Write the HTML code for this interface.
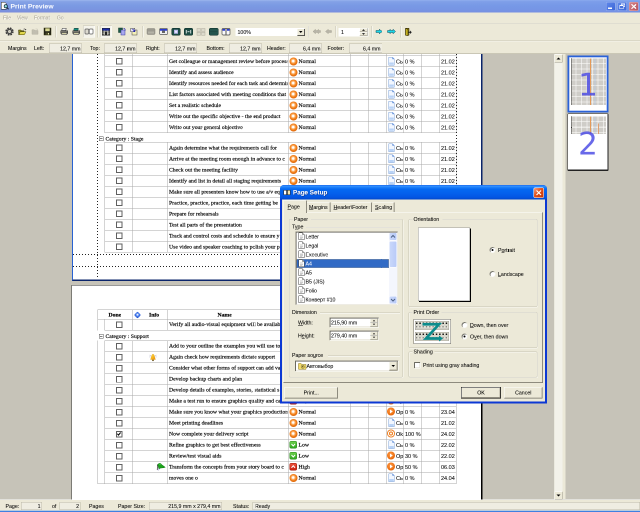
<!DOCTYPE html><html><head><meta charset="utf-8"><title>Print Preview</title><style>
html,body{margin:0;padding:0;background:#c6c3b8;}
body{width:640px;height:512px;overflow:hidden;position:relative;}
#r{position:absolute;left:0;top:0;width:1280px;height:1024px;transform:scale(.5);transform-origin:0 0;overflow:hidden;
 font-family:"Liberation Sans","DejaVu Sans",sans-serif;font-size:10.5px;color:#000;will-change:transform;}
#r div,#r span,#r svg{position:absolute;box-sizing:border-box;}
.t{white-space:nowrap;line-height:14px;height:14px;-webkit-text-stroke:.1px currentColor;}
.ser{font-family:"Liberation Serif","DejaVu Serif",serif;font-size:11.4px;-webkit-text-stroke:.3px #000;white-space:nowrap;line-height:14px;height:14px;overflow:hidden}
.fld{border:1px solid #bdbaa8;background:#efede2;height:20px;}
.fld .t{right:2px;top:2px;}
.etch{border:1px solid #d0cebf;border-radius:4px;}
.btn{border:1px solid #003c74;border-radius:3px;background:linear-gradient(#fff,#f3f2ea 60%,#d9d6c8);text-align:center;line-height:19px;}
.wb{border:1px solid rgba(255,255,255,.45);border-radius:3px;width:19px;height:18px;top:4px;}
</style></head><body><div id="r">
<div style="left:0;top:108px;width:1280px;height:890px;background:#c6c3b8"></div>
<div style="left:144px;top:60px;width:821px;height:502px;background:#fff;border:2px solid #2862d2;border-right:3px solid #0a246a;border-bottom:3px solid #0a246a"></div>
<div style="left:209px;top:111px;width:703px;height:23px;border-top:1px solid #a9a9a9;border-bottom:1px solid #a9a9a9;"></div><div style="left:232px;top:116px;width:13px;height:13px;background:#606060"></div><div style="left:234px;top:118px;width:9px;height:9px;background:#fff"></div><div class="ser" style="left:338px;top:115px;width:237px">Get colleague or management review before processing</div><div style="left:579px;top:115px;width:16px;height:16px;border-radius:50%;background:radial-gradient(circle at 46% 44%,#fff 0 14%,#ffc080 26%,#f48420 46%,#e06808 68%,#b84c00 100%);"></div><div class="ser" style="left:597px;top:115px;">Normal</div><svg style="left:776px;top:114px" width="14" height="17" viewBox="0 0 14 17"><path d="M1.5 .5 H9 L12.5 4 V16.5 H1.5 Z" fill="#f2f7ff" stroke="#7fa3d8"/><path d="M9 .5 V4 H12.5Z" fill="#5f8fe0" stroke="#6f98dc"/><path d="M2.500 11 H11.500 V15.500 H2.500Z" fill="#b8d2f6"/></svg><div class="t" style="left:792px;top:116px;width:15px;overflow:hidden;font-size:11px">Сь</div><div class="t" style="left:810px;top:116px;font-size:11px">0 %</div><div class="t" style="left:882px;top:116px;font-size:11px;width:28px;overflow:hidden">21.02.</div>
<div style="left:209px;top:133px;width:703px;height:23px;border-top:1px solid #a9a9a9;border-bottom:1px solid #a9a9a9;"></div><div style="left:232px;top:138px;width:13px;height:13px;background:#606060"></div><div style="left:234px;top:140px;width:9px;height:9px;background:#fff"></div><div class="ser" style="left:338px;top:137px;width:237px">Identify and assess audience</div><div style="left:579px;top:137px;width:16px;height:16px;border-radius:50%;background:radial-gradient(circle at 46% 44%,#fff 0 14%,#ffc080 26%,#f48420 46%,#e06808 68%,#b84c00 100%);"></div><div class="ser" style="left:597px;top:137px;">Normal</div><svg style="left:776px;top:136px" width="14" height="17" viewBox="0 0 14 17"><path d="M1.5 .5 H9 L12.5 4 V16.5 H1.5 Z" fill="#f2f7ff" stroke="#7fa3d8"/><path d="M9 .5 V4 H12.5Z" fill="#5f8fe0" stroke="#6f98dc"/><path d="M2.500 11 H11.500 V15.500 H2.500Z" fill="#b8d2f6"/></svg><div class="t" style="left:792px;top:138px;width:15px;overflow:hidden;font-size:11px">Сь</div><div class="t" style="left:810px;top:138px;font-size:11px">0 %</div><div class="t" style="left:882px;top:138px;font-size:11px;width:28px;overflow:hidden">21.02.</div>
<div style="left:209px;top:155px;width:703px;height:23px;border-top:1px solid #a9a9a9;border-bottom:1px solid #a9a9a9;"></div><div style="left:232px;top:160px;width:13px;height:13px;background:#606060"></div><div style="left:234px;top:162px;width:9px;height:9px;background:#fff"></div><div class="ser" style="left:338px;top:159px;width:237px">Identify resources needed for each task and determine</div><div style="left:579px;top:159px;width:16px;height:16px;border-radius:50%;background:radial-gradient(circle at 46% 44%,#fff 0 14%,#ffc080 26%,#f48420 46%,#e06808 68%,#b84c00 100%);"></div><div class="ser" style="left:597px;top:159px;">Normal</div><svg style="left:776px;top:158px" width="14" height="17" viewBox="0 0 14 17"><path d="M1.5 .5 H9 L12.5 4 V16.5 H1.5 Z" fill="#f2f7ff" stroke="#7fa3d8"/><path d="M9 .5 V4 H12.5Z" fill="#5f8fe0" stroke="#6f98dc"/><path d="M2.500 11 H11.500 V15.500 H2.500Z" fill="#b8d2f6"/></svg><div class="t" style="left:792px;top:160px;width:15px;overflow:hidden;font-size:11px">Сь</div><div class="t" style="left:810px;top:160px;font-size:11px">0 %</div><div class="t" style="left:882px;top:160px;font-size:11px;width:28px;overflow:hidden">21.02.</div>
<div style="left:209px;top:177px;width:703px;height:23px;border-top:1px solid #a9a9a9;border-bottom:1px solid #a9a9a9;"></div><div style="left:232px;top:182px;width:13px;height:13px;background:#606060"></div><div style="left:234px;top:184px;width:9px;height:9px;background:#fff"></div><div class="ser" style="left:338px;top:181px;width:237px">List factors associated with meeting conditions that</div><div style="left:579px;top:181px;width:16px;height:16px;border-radius:50%;background:radial-gradient(circle at 46% 44%,#fff 0 14%,#ffc080 26%,#f48420 46%,#e06808 68%,#b84c00 100%);"></div><div class="ser" style="left:597px;top:181px;">Normal</div><svg style="left:776px;top:180px" width="14" height="17" viewBox="0 0 14 17"><path d="M1.5 .5 H9 L12.5 4 V16.5 H1.5 Z" fill="#f2f7ff" stroke="#7fa3d8"/><path d="M9 .5 V4 H12.5Z" fill="#5f8fe0" stroke="#6f98dc"/><path d="M2.500 11 H11.500 V15.500 H2.500Z" fill="#b8d2f6"/></svg><div class="t" style="left:792px;top:182px;width:15px;overflow:hidden;font-size:11px">Сь</div><div class="t" style="left:810px;top:182px;font-size:11px">0 %</div><div class="t" style="left:882px;top:182px;font-size:11px;width:28px;overflow:hidden">21.02.</div>
<div style="left:209px;top:199px;width:703px;height:23px;border-top:1px solid #a9a9a9;border-bottom:1px solid #a9a9a9;"></div><div style="left:232px;top:204px;width:13px;height:13px;background:#606060"></div><div style="left:234px;top:206px;width:9px;height:9px;background:#fff"></div><div class="ser" style="left:338px;top:203px;width:237px">Set a realistic schedule</div><div style="left:579px;top:203px;width:16px;height:16px;border-radius:50%;background:radial-gradient(circle at 46% 44%,#fff 0 14%,#ffc080 26%,#f48420 46%,#e06808 68%,#b84c00 100%);"></div><div class="ser" style="left:597px;top:203px;">Normal</div><svg style="left:776px;top:202px" width="14" height="17" viewBox="0 0 14 17"><path d="M1.5 .5 H9 L12.5 4 V16.5 H1.5 Z" fill="#f2f7ff" stroke="#7fa3d8"/><path d="M9 .5 V4 H12.5Z" fill="#5f8fe0" stroke="#6f98dc"/><path d="M2.500 11 H11.500 V15.500 H2.500Z" fill="#b8d2f6"/></svg><div class="t" style="left:792px;top:204px;width:15px;overflow:hidden;font-size:11px">Сь</div><div class="t" style="left:810px;top:204px;font-size:11px">0 %</div><div class="t" style="left:882px;top:204px;font-size:11px;width:28px;overflow:hidden">21.02.</div>
<div style="left:209px;top:221px;width:703px;height:23px;border-top:1px solid #a9a9a9;border-bottom:1px solid #a9a9a9;"></div><div style="left:232px;top:226px;width:13px;height:13px;background:#606060"></div><div style="left:234px;top:228px;width:9px;height:9px;background:#fff"></div><div class="ser" style="left:338px;top:225px;width:237px">Write out the specific objective - the end product</div><div style="left:579px;top:225px;width:16px;height:16px;border-radius:50%;background:radial-gradient(circle at 46% 44%,#fff 0 14%,#ffc080 26%,#f48420 46%,#e06808 68%,#b84c00 100%);"></div><div class="ser" style="left:597px;top:225px;">Normal</div><svg style="left:776px;top:224px" width="14" height="17" viewBox="0 0 14 17"><path d="M1.5 .5 H9 L12.5 4 V16.5 H1.5 Z" fill="#f2f7ff" stroke="#7fa3d8"/><path d="M9 .5 V4 H12.5Z" fill="#5f8fe0" stroke="#6f98dc"/><path d="M2.500 11 H11.500 V15.500 H2.500Z" fill="#b8d2f6"/></svg><div class="t" style="left:792px;top:226px;width:15px;overflow:hidden;font-size:11px">Сь</div><div class="t" style="left:810px;top:226px;font-size:11px">0 %</div><div class="t" style="left:882px;top:226px;font-size:11px;width:28px;overflow:hidden">21.02.</div>
<div style="left:209px;top:243px;width:703px;height:23px;border-top:1px solid #a9a9a9;border-bottom:1px solid #a9a9a9;"></div><div style="left:232px;top:248px;width:13px;height:13px;background:#606060"></div><div style="left:234px;top:250px;width:9px;height:9px;background:#fff"></div><div class="ser" style="left:338px;top:247px;width:237px">Write out your general objective</div><div style="left:579px;top:247px;width:16px;height:16px;border-radius:50%;background:radial-gradient(circle at 46% 44%,#fff 0 14%,#ffc080 26%,#f48420 46%,#e06808 68%,#b84c00 100%);"></div><div class="ser" style="left:597px;top:247px;">Normal</div><svg style="left:776px;top:246px" width="14" height="17" viewBox="0 0 14 17"><path d="M1.5 .5 H9 L12.5 4 V16.5 H1.5 Z" fill="#f2f7ff" stroke="#7fa3d8"/><path d="M9 .5 V4 H12.5Z" fill="#5f8fe0" stroke="#6f98dc"/><path d="M2.500 11 H11.500 V15.500 H2.500Z" fill="#b8d2f6"/></svg><div class="t" style="left:792px;top:248px;width:15px;overflow:hidden;font-size:11px">Сь</div><div class="t" style="left:810px;top:248px;font-size:11px">0 %</div><div class="t" style="left:882px;top:248px;font-size:11px;width:28px;overflow:hidden">21.02.</div>
<div style="left:209px;top:108px;width:1px;height:157px;background:#a9a9a9"></div><div style="left:265px;top:108px;width:1px;height:157px;background:#a9a9a9"></div><div style="left:335px;top:108px;width:1px;height:157px;background:#a9a9a9"></div><div style="left:576px;top:108px;width:1px;height:157px;background:#a9a9a9"></div><div style="left:701px;top:108px;width:1px;height:157px;background:#a9a9a9"></div><div style="left:737px;top:108px;width:1px;height:157px;background:#a9a9a9"></div><div style="left:773px;top:108px;width:1px;height:157px;background:#a9a9a9"></div><div style="left:807px;top:108px;width:1px;height:157px;background:#a9a9a9"></div><div style="left:842px;top:108px;width:1px;height:157px;background:#a9a9a9"></div><div style="left:879px;top:108px;width:1px;height:157px;background:#a9a9a9"></div><div style="left:912px;top:108px;width:1px;height:157px;background:#a9a9a9"></div>
<div style="left:198px;top:273px;width:9px;height:9px;border:1px solid #555;background:#fff"></div><div style="left:200px;top:277px;width:5px;height:1px;background:#000"></div><div class="ser" style="left:211px;top:270px">Category : Stage</div>
<div style="left:209px;top:284px;width:703px;height:23px;border-top:1px solid #a9a9a9;border-bottom:1px solid #a9a9a9;"></div><div style="left:232px;top:289px;width:13px;height:13px;background:#606060"></div><div style="left:234px;top:291px;width:9px;height:9px;background:#fff"></div><div class="ser" style="left:338px;top:288px;width:237px">Again determine what the requirements call for</div><div style="left:579px;top:288px;width:16px;height:16px;border-radius:50%;background:radial-gradient(circle at 46% 44%,#fff 0 14%,#ffc080 26%,#f48420 46%,#e06808 68%,#b84c00 100%);"></div><div class="ser" style="left:597px;top:288px;">Normal</div><svg style="left:776px;top:287px" width="14" height="17" viewBox="0 0 14 17"><path d="M1.5 .5 H9 L12.5 4 V16.5 H1.5 Z" fill="#f2f7ff" stroke="#7fa3d8"/><path d="M9 .5 V4 H12.5Z" fill="#5f8fe0" stroke="#6f98dc"/><path d="M2.500 11 H11.500 V15.500 H2.500Z" fill="#b8d2f6"/></svg><div class="t" style="left:792px;top:289px;width:15px;overflow:hidden;font-size:11px">Сь</div><div class="t" style="left:810px;top:289px;font-size:11px">0 %</div><div class="t" style="left:882px;top:289px;font-size:11px;width:28px;overflow:hidden">21.02.</div>
<div style="left:209px;top:306px;width:703px;height:23px;border-top:1px solid #a9a9a9;border-bottom:1px solid #a9a9a9;"></div><div style="left:232px;top:311px;width:13px;height:13px;background:#606060"></div><div style="left:234px;top:313px;width:9px;height:9px;background:#fff"></div><div class="ser" style="left:338px;top:310px;width:237px">Arrive at the meeting room enough in advance to c</div><div style="left:579px;top:310px;width:16px;height:16px;border-radius:50%;background:radial-gradient(circle at 46% 44%,#fff 0 14%,#ffc080 26%,#f48420 46%,#e06808 68%,#b84c00 100%);"></div><div class="ser" style="left:597px;top:310px;">Normal</div><svg style="left:776px;top:309px" width="14" height="17" viewBox="0 0 14 17"><path d="M1.5 .5 H9 L12.5 4 V16.5 H1.5 Z" fill="#f2f7ff" stroke="#7fa3d8"/><path d="M9 .5 V4 H12.5Z" fill="#5f8fe0" stroke="#6f98dc"/><path d="M2.500 11 H11.500 V15.500 H2.500Z" fill="#b8d2f6"/></svg><div class="t" style="left:792px;top:311px;width:15px;overflow:hidden;font-size:11px">Сь</div><div class="t" style="left:810px;top:311px;font-size:11px">0 %</div><div class="t" style="left:882px;top:311px;font-size:11px;width:28px;overflow:hidden">21.02.</div>
<div style="left:209px;top:328px;width:703px;height:23px;border-top:1px solid #a9a9a9;border-bottom:1px solid #a9a9a9;"></div><div style="left:232px;top:333px;width:13px;height:13px;background:#606060"></div><div style="left:234px;top:335px;width:9px;height:9px;background:#fff"></div><div class="ser" style="left:338px;top:332px;width:237px">Check out the meeting facility</div><div style="left:579px;top:332px;width:16px;height:16px;border-radius:50%;background:radial-gradient(circle at 46% 44%,#fff 0 14%,#ffc080 26%,#f48420 46%,#e06808 68%,#b84c00 100%);"></div><div class="ser" style="left:597px;top:332px;">Normal</div><svg style="left:776px;top:331px" width="14" height="17" viewBox="0 0 14 17"><path d="M1.5 .5 H9 L12.5 4 V16.5 H1.5 Z" fill="#f2f7ff" stroke="#7fa3d8"/><path d="M9 .5 V4 H12.5Z" fill="#5f8fe0" stroke="#6f98dc"/><path d="M2.500 11 H11.500 V15.500 H2.500Z" fill="#b8d2f6"/></svg><div class="t" style="left:792px;top:333px;width:15px;overflow:hidden;font-size:11px">Сь</div><div class="t" style="left:810px;top:333px;font-size:11px">0 %</div><div class="t" style="left:882px;top:333px;font-size:11px;width:28px;overflow:hidden">21.02.</div>
<div style="left:209px;top:350px;width:703px;height:23px;border-top:1px solid #a9a9a9;border-bottom:1px solid #a9a9a9;"></div><div style="left:232px;top:355px;width:13px;height:13px;background:#606060"></div><div style="left:234px;top:357px;width:9px;height:9px;background:#fff"></div><div class="ser" style="left:338px;top:354px;width:237px">Identify and list in detail all staging requirements</div><div style="left:579px;top:354px;width:16px;height:16px;border-radius:50%;background:radial-gradient(circle at 46% 44%,#fff 0 14%,#ffc080 26%,#f48420 46%,#e06808 68%,#b84c00 100%);"></div><div class="ser" style="left:597px;top:354px;">Normal</div><svg style="left:776px;top:353px" width="14" height="17" viewBox="0 0 14 17"><path d="M1.5 .5 H9 L12.5 4 V16.5 H1.5 Z" fill="#f2f7ff" stroke="#7fa3d8"/><path d="M9 .5 V4 H12.5Z" fill="#5f8fe0" stroke="#6f98dc"/><path d="M2.500 11 H11.500 V15.500 H2.500Z" fill="#b8d2f6"/></svg><div class="t" style="left:792px;top:355px;width:15px;overflow:hidden;font-size:11px">Сь</div><div class="t" style="left:810px;top:355px;font-size:11px">0 %</div><div class="t" style="left:882px;top:355px;font-size:11px;width:28px;overflow:hidden">21.02.</div>
<div style="left:209px;top:372px;width:703px;height:23px;border-top:1px solid #a9a9a9;border-bottom:1px solid #a9a9a9;"></div><div style="left:232px;top:377px;width:13px;height:13px;background:#606060"></div><div style="left:234px;top:379px;width:9px;height:9px;background:#fff"></div><div class="ser" style="left:338px;top:376px;width:237px">Make sure all presenters know how to use a/v equ</div><div style="left:579px;top:376px;width:16px;height:16px;border-radius:50%;background:radial-gradient(circle at 46% 44%,#fff 0 14%,#ffc080 26%,#f48420 46%,#e06808 68%,#b84c00 100%);"></div><div class="ser" style="left:597px;top:376px;">Normal</div><svg style="left:776px;top:375px" width="14" height="17" viewBox="0 0 14 17"><path d="M1.5 .5 H9 L12.5 4 V16.5 H1.5 Z" fill="#f2f7ff" stroke="#7fa3d8"/><path d="M9 .5 V4 H12.5Z" fill="#5f8fe0" stroke="#6f98dc"/><path d="M2.500 11 H11.500 V15.500 H2.500Z" fill="#b8d2f6"/></svg><div class="t" style="left:792px;top:377px;width:15px;overflow:hidden;font-size:11px">Сь</div><div class="t" style="left:810px;top:377px;font-size:11px">0 %</div><div class="t" style="left:882px;top:377px;font-size:11px;width:28px;overflow:hidden">21.02.</div>
<div style="left:209px;top:394px;width:703px;height:23px;border-top:1px solid #a9a9a9;border-bottom:1px solid #a9a9a9;"></div><div style="left:232px;top:399px;width:13px;height:13px;background:#606060"></div><div style="left:234px;top:401px;width:9px;height:9px;background:#fff"></div><div class="ser" style="left:338px;top:398px;width:237px">Practice, practice, practice, each time getting be</div><div style="left:579px;top:398px;width:16px;height:16px;border-radius:50%;background:radial-gradient(circle at 46% 44%,#fff 0 14%,#ffc080 26%,#f48420 46%,#e06808 68%,#b84c00 100%);"></div><div class="ser" style="left:597px;top:398px;">Normal</div><svg style="left:776px;top:397px" width="14" height="17" viewBox="0 0 14 17"><path d="M1.5 .5 H9 L12.5 4 V16.5 H1.5 Z" fill="#f2f7ff" stroke="#7fa3d8"/><path d="M9 .5 V4 H12.5Z" fill="#5f8fe0" stroke="#6f98dc"/><path d="M2.500 11 H11.500 V15.500 H2.500Z" fill="#b8d2f6"/></svg><div class="t" style="left:792px;top:399px;width:15px;overflow:hidden;font-size:11px">Сь</div><div class="t" style="left:810px;top:399px;font-size:11px">0 %</div><div class="t" style="left:882px;top:399px;font-size:11px;width:28px;overflow:hidden">21.02.</div>
<div style="left:209px;top:416px;width:703px;height:23px;border-top:1px solid #a9a9a9;border-bottom:1px solid #a9a9a9;"></div><div style="left:232px;top:421px;width:13px;height:13px;background:#606060"></div><div style="left:234px;top:423px;width:9px;height:9px;background:#fff"></div><div class="ser" style="left:338px;top:420px;width:237px">Prepare for rehearsals</div><div style="left:579px;top:420px;width:16px;height:16px;border-radius:50%;background:radial-gradient(circle at 46% 44%,#fff 0 14%,#ffc080 26%,#f48420 46%,#e06808 68%,#b84c00 100%);"></div><div class="ser" style="left:597px;top:420px;">Normal</div><svg style="left:776px;top:419px" width="14" height="17" viewBox="0 0 14 17"><path d="M1.5 .5 H9 L12.5 4 V16.5 H1.5 Z" fill="#f2f7ff" stroke="#7fa3d8"/><path d="M9 .5 V4 H12.5Z" fill="#5f8fe0" stroke="#6f98dc"/><path d="M2.500 11 H11.500 V15.500 H2.500Z" fill="#b8d2f6"/></svg><div class="t" style="left:792px;top:421px;width:15px;overflow:hidden;font-size:11px">Сь</div><div class="t" style="left:810px;top:421px;font-size:11px">0 %</div><div class="t" style="left:882px;top:421px;font-size:11px;width:28px;overflow:hidden">21.02.</div>
<div style="left:209px;top:438px;width:703px;height:23px;border-top:1px solid #a9a9a9;border-bottom:1px solid #a9a9a9;"></div><div style="left:232px;top:443px;width:13px;height:13px;background:#606060"></div><div style="left:234px;top:445px;width:9px;height:9px;background:#fff"></div><div class="ser" style="left:338px;top:442px;width:237px">Test all parts of the presentation</div><div style="left:579px;top:442px;width:16px;height:16px;border-radius:50%;background:radial-gradient(circle at 46% 44%,#fff 0 14%,#ffc080 26%,#f48420 46%,#e06808 68%,#b84c00 100%);"></div><div class="ser" style="left:597px;top:442px;">Normal</div><svg style="left:776px;top:441px" width="14" height="17" viewBox="0 0 14 17"><path d="M1.5 .5 H9 L12.5 4 V16.5 H1.5 Z" fill="#f2f7ff" stroke="#7fa3d8"/><path d="M9 .5 V4 H12.5Z" fill="#5f8fe0" stroke="#6f98dc"/><path d="M2.500 11 H11.500 V15.500 H2.500Z" fill="#b8d2f6"/></svg><div class="t" style="left:792px;top:443px;width:15px;overflow:hidden;font-size:11px">Сь</div><div class="t" style="left:810px;top:443px;font-size:11px">0 %</div><div class="t" style="left:882px;top:443px;font-size:11px;width:28px;overflow:hidden">21.02.</div>
<div style="left:209px;top:460px;width:703px;height:23px;border-top:1px solid #a9a9a9;border-bottom:1px solid #a9a9a9;"></div><div style="left:232px;top:465px;width:13px;height:13px;background:#606060"></div><div style="left:234px;top:467px;width:9px;height:9px;background:#fff"></div><div class="ser" style="left:338px;top:464px;width:237px">Track and control costs and schedule to ensure y</div><div style="left:579px;top:464px;width:16px;height:16px;border-radius:50%;background:radial-gradient(circle at 46% 44%,#fff 0 14%,#ffc080 26%,#f48420 46%,#e06808 68%,#b84c00 100%);"></div><div class="ser" style="left:597px;top:464px;">Normal</div><svg style="left:776px;top:463px" width="14" height="17" viewBox="0 0 14 17"><path d="M1.5 .5 H9 L12.5 4 V16.5 H1.5 Z" fill="#f2f7ff" stroke="#7fa3d8"/><path d="M9 .5 V4 H12.5Z" fill="#5f8fe0" stroke="#6f98dc"/><path d="M2.500 11 H11.500 V15.500 H2.500Z" fill="#b8d2f6"/></svg><div class="t" style="left:792px;top:465px;width:15px;overflow:hidden;font-size:11px">Сь</div><div class="t" style="left:810px;top:465px;font-size:11px">0 %</div><div class="t" style="left:882px;top:465px;font-size:11px;width:28px;overflow:hidden">21.02.</div>
<div style="left:209px;top:482px;width:703px;height:23px;border-top:1px solid #a9a9a9;border-bottom:1px solid #a9a9a9;"></div><div style="left:232px;top:487px;width:13px;height:13px;background:#606060"></div><div style="left:234px;top:489px;width:9px;height:9px;background:#fff"></div><div class="ser" style="left:338px;top:486px;width:237px">Use video and speaker coaching to polish your p</div><div style="left:579px;top:486px;width:16px;height:16px;border-radius:50%;background:radial-gradient(circle at 46% 44%,#fff 0 14%,#ffc080 26%,#f48420 46%,#e06808 68%,#b84c00 100%);"></div><div class="ser" style="left:597px;top:486px;">Normal</div><svg style="left:776px;top:485px" width="14" height="17" viewBox="0 0 14 17"><path d="M1.5 .5 H9 L12.5 4 V16.5 H1.5 Z" fill="#f2f7ff" stroke="#7fa3d8"/><path d="M9 .5 V4 H12.5Z" fill="#5f8fe0" stroke="#6f98dc"/><path d="M2.500 11 H11.500 V15.500 H2.500Z" fill="#b8d2f6"/></svg><div class="t" style="left:792px;top:487px;width:15px;overflow:hidden;font-size:11px">Сь</div><div class="t" style="left:810px;top:487px;font-size:11px">0 %</div><div class="t" style="left:882px;top:487px;font-size:11px;width:28px;overflow:hidden">21.02.</div>
<div style="left:209px;top:284px;width:1px;height:221px;background:#a9a9a9"></div><div style="left:265px;top:284px;width:1px;height:221px;background:#a9a9a9"></div><div style="left:335px;top:284px;width:1px;height:221px;background:#a9a9a9"></div><div style="left:576px;top:284px;width:1px;height:221px;background:#a9a9a9"></div><div style="left:701px;top:284px;width:1px;height:221px;background:#a9a9a9"></div><div style="left:737px;top:284px;width:1px;height:221px;background:#a9a9a9"></div><div style="left:773px;top:284px;width:1px;height:221px;background:#a9a9a9"></div><div style="left:807px;top:284px;width:1px;height:221px;background:#a9a9a9"></div><div style="left:842px;top:284px;width:1px;height:221px;background:#a9a9a9"></div><div style="left:879px;top:284px;width:1px;height:221px;background:#a9a9a9"></div><div style="left:912px;top:284px;width:1px;height:221px;background:#a9a9a9"></div>
<div style="left:194px;top:108px;width:2px;height:448px;background:repeating-linear-gradient(#222 0 2px,transparent 2px 6px)"></div>
<div style="left:912px;top:108px;width:2px;height:448px;background:repeating-linear-gradient(#222 0 2px,transparent 2px 6px)"></div>
<div style="left:146px;top:508px;width:816px;height:2px;background:repeating-linear-gradient(90deg,#222 0 2px,transparent 2px 6px)"></div>
<div style="left:146px;top:532px;width:816px;height:2px;background:repeating-linear-gradient(90deg,#222 0 2px,transparent 2px 6px)"></div>
<div style="left:143px;top:570px;width:822px;height:460px;background:#fff;border:1px solid #333;border-right:3px solid #000;"></div>
<div style="left:195px;top:619px;width:717px;height:20px;border:1px solid #a9a9a9;"></div>
<div class="ser" style="left:217px;top:622px;font-weight:bold">Done</div>
<div style="left:270px;top:625px;width:10px;height:10px;border-radius:2.500px;transform:rotate(45deg);background:radial-gradient(circle at 45% 45%,#e8f0ff 0 12%,#5a8cf0 35%,#2458d8 70%,#1840b0)"></div>
<div class="ser" style="left:298px;top:622px;font-weight:bold">Info</div>
<div class="ser" style="left:435px;top:622px;font-weight:bold">Name</div>
<div style="left:265px;top:619px;width:1px;height:19px;background:#a9a9a9"></div><div style="left:335px;top:619px;width:1px;height:19px;background:#a9a9a9"></div><div style="left:576px;top:619px;width:1px;height:19px;background:#a9a9a9"></div>
<div style="left:209px;top:638px;width:703px;height:23px;border-top:1px solid #a9a9a9;border-bottom:1px solid #a9a9a9;"></div><div style="left:232px;top:643px;width:13px;height:13px;background:#606060"></div><div style="left:234px;top:645px;width:9px;height:9px;background:#fff"></div><div class="ser" style="left:338px;top:641px;width:237px">Verify all audio-visual equipment will be available</div><div style="left:579px;top:641px;width:16px;height:16px;border-radius:50%;background:radial-gradient(circle at 46% 44%,#fff 0 14%,#ffc080 26%,#f48420 46%,#e06808 68%,#b84c00 100%);"></div><div class="ser" style="left:597px;top:641px;">Normal</div><svg style="left:776px;top:640px" width="14" height="17" viewBox="0 0 14 17"><path d="M1.5 .5 H9 L12.5 4 V16.5 H1.5 Z" fill="#f2f7ff" stroke="#7fa3d8"/><path d="M9 .5 V4 H12.5Z" fill="#5f8fe0" stroke="#6f98dc"/><path d="M2.500 11 H11.500 V15.500 H2.500Z" fill="#b8d2f6"/></svg><div class="t" style="left:792px;top:642px;width:15px;overflow:hidden;font-size:11px">Сь</div><div class="t" style="left:810px;top:642px;font-size:11px">0 %</div><div class="t" style="left:882px;top:642px;font-size:11px;width:28px;overflow:hidden">21.02.</div>
<div style="left:195px;top:638px;width:1px;height:23px;background:#a9a9a9"></div><div style="left:209px;top:638px;width:1px;height:23px;background:#a9a9a9"></div><div style="left:265px;top:638px;width:1px;height:23px;background:#a9a9a9"></div><div style="left:335px;top:638px;width:1px;height:23px;background:#a9a9a9"></div><div style="left:576px;top:638px;width:1px;height:23px;background:#a9a9a9"></div><div style="left:701px;top:638px;width:1px;height:23px;background:#a9a9a9"></div><div style="left:737px;top:638px;width:1px;height:23px;background:#a9a9a9"></div><div style="left:773px;top:638px;width:1px;height:23px;background:#a9a9a9"></div><div style="left:807px;top:638px;width:1px;height:23px;background:#a9a9a9"></div><div style="left:842px;top:638px;width:1px;height:23px;background:#a9a9a9"></div><div style="left:879px;top:638px;width:1px;height:23px;background:#a9a9a9"></div><div style="left:912px;top:638px;width:1px;height:23px;background:#a9a9a9"></div>
<div style="left:198px;top:668px;width:9px;height:9px;border:1px solid #555;background:#fff"></div><div style="left:200px;top:672px;width:5px;height:1px;background:#000"></div><div class="ser" style="left:211px;top:665px">Category : Support</div>
<div style="left:209px;top:681px;width:703px;height:23px;border-top:1px solid #a9a9a9;border-bottom:1px solid #a9a9a9;"></div><div style="left:232px;top:686px;width:13px;height:13px;background:#606060"></div><div style="left:234px;top:688px;width:9px;height:9px;background:#fff"></div><div class="ser" style="left:338px;top:684px;width:237px">Add to your outline the examples you will use to</div><div style="left:579px;top:684px;width:16px;height:16px;border-radius:50%;background:radial-gradient(circle at 46% 44%,#fff 0 14%,#ffc080 26%,#f48420 46%,#e06808 68%,#b84c00 100%);"></div><div class="ser" style="left:597px;top:684px;">Normal</div><svg style="left:776px;top:683px" width="14" height="17" viewBox="0 0 14 17"><path d="M1.5 .5 H9 L12.5 4 V16.5 H1.5 Z" fill="#f2f7ff" stroke="#7fa3d8"/><path d="M9 .5 V4 H12.5Z" fill="#5f8fe0" stroke="#6f98dc"/><path d="M2.500 11 H11.500 V15.500 H2.500Z" fill="#b8d2f6"/></svg><div class="t" style="left:792px;top:685px;width:15px;overflow:hidden;font-size:11px">Сь</div><div class="t" style="left:810px;top:685px;font-size:11px">0 %</div><div class="t" style="left:882px;top:685px;font-size:11px;width:28px;overflow:hidden">21.02.</div>
<div style="left:209px;top:703px;width:703px;height:23px;border-top:1px solid #a9a9a9;border-bottom:1px solid #a9a9a9;"></div><div style="left:232px;top:708px;width:13px;height:13px;background:#606060"></div><div style="left:234px;top:710px;width:9px;height:9px;background:#fff"></div><svg style="left:297px;top:706px" width="18" height="18" viewBox="0 0 16 16"><defs><linearGradient id="bg702" x1="0" y1="0" x2="1" y2="1"><stop offset="0" stop-color="#ffe84a"/><stop offset="1" stop-color="#ee8a00"/></linearGradient></defs><path d="M8 2 C5 3 5.500 8 3.500 11.500 H12.500 C10.500 8 11 3 8 2Z" fill="url(#bg702)" stroke="#d89000" stroke-width=".6"/><circle cx="8" cy="13" r="1.400" fill="#5c4000"/><path d="M2 3.500 L4.200 5.500 M14 3.500 L11.800 5.500 M1.500 7 H3.500 M14.500 7 H12.500" stroke="#b4b4cc"/></svg><div class="ser" style="left:338px;top:706px;width:237px">Again check how requirements dictate support</div><div style="left:579px;top:706px;width:16px;height:16px;border-radius:50%;background:radial-gradient(circle at 46% 44%,#fff 0 14%,#ffc080 26%,#f48420 46%,#e06808 68%,#b84c00 100%);"></div><div class="ser" style="left:597px;top:706px;">Normal</div><svg style="left:776px;top:705px" width="14" height="17" viewBox="0 0 14 17"><path d="M1.5 .5 H9 L12.5 4 V16.5 H1.5 Z" fill="#f2f7ff" stroke="#7fa3d8"/><path d="M9 .5 V4 H12.5Z" fill="#5f8fe0" stroke="#6f98dc"/><path d="M2.500 11 H11.500 V15.500 H2.500Z" fill="#b8d2f6"/></svg><div class="t" style="left:792px;top:707px;width:15px;overflow:hidden;font-size:11px">Сь</div><div class="t" style="left:810px;top:707px;font-size:11px">0 %</div><div class="t" style="left:882px;top:707px;font-size:11px;width:28px;overflow:hidden">21.02.</div>
<div style="left:209px;top:725px;width:703px;height:23px;border-top:1px solid #a9a9a9;border-bottom:1px solid #a9a9a9;"></div><div style="left:232px;top:730px;width:13px;height:13px;background:#606060"></div><div style="left:234px;top:732px;width:9px;height:9px;background:#fff"></div><div class="ser" style="left:338px;top:728px;width:237px">Consider what other forms of support can add va</div><div style="left:579px;top:728px;width:16px;height:16px;border-radius:50%;background:radial-gradient(circle at 46% 44%,#fff 0 14%,#ffc080 26%,#f48420 46%,#e06808 68%,#b84c00 100%);"></div><div class="ser" style="left:597px;top:728px;">Normal</div><svg style="left:776px;top:727px" width="14" height="17" viewBox="0 0 14 17"><path d="M1.5 .5 H9 L12.5 4 V16.5 H1.5 Z" fill="#f2f7ff" stroke="#7fa3d8"/><path d="M9 .5 V4 H12.5Z" fill="#5f8fe0" stroke="#6f98dc"/><path d="M2.500 11 H11.500 V15.500 H2.500Z" fill="#b8d2f6"/></svg><div class="t" style="left:792px;top:729px;width:15px;overflow:hidden;font-size:11px">Сь</div><div class="t" style="left:810px;top:729px;font-size:11px">0 %</div><div class="t" style="left:882px;top:729px;font-size:11px;width:28px;overflow:hidden">21.02.</div>
<div style="left:209px;top:747px;width:703px;height:23px;border-top:1px solid #a9a9a9;border-bottom:1px solid #a9a9a9;"></div><div style="left:232px;top:752px;width:13px;height:13px;background:#606060"></div><div style="left:234px;top:754px;width:9px;height:9px;background:#fff"></div><div class="ser" style="left:338px;top:750px;width:237px">Develop backup charts and plan</div><div style="left:579px;top:750px;width:16px;height:16px;border-radius:50%;background:radial-gradient(circle at 46% 44%,#fff 0 14%,#ffc080 26%,#f48420 46%,#e06808 68%,#b84c00 100%);"></div><div class="ser" style="left:597px;top:750px;">Normal</div><svg style="left:776px;top:749px" width="14" height="17" viewBox="0 0 14 17"><path d="M1.5 .5 H9 L12.5 4 V16.5 H1.5 Z" fill="#f2f7ff" stroke="#7fa3d8"/><path d="M9 .5 V4 H12.5Z" fill="#5f8fe0" stroke="#6f98dc"/><path d="M2.500 11 H11.500 V15.500 H2.500Z" fill="#b8d2f6"/></svg><div class="t" style="left:792px;top:751px;width:15px;overflow:hidden;font-size:11px">Сь</div><div class="t" style="left:810px;top:751px;font-size:11px">0 %</div><div class="t" style="left:882px;top:751px;font-size:11px;width:28px;overflow:hidden">21.02.</div>
<div style="left:209px;top:769px;width:703px;height:23px;border-top:1px solid #a9a9a9;border-bottom:1px solid #a9a9a9;"></div><div style="left:232px;top:774px;width:13px;height:13px;background:#606060"></div><div style="left:234px;top:776px;width:9px;height:9px;background:#fff"></div><div class="ser" style="left:338px;top:772px;width:237px">Develop details of examples, stories, statistical s</div><div style="left:579px;top:772px;width:16px;height:16px;border-radius:50%;background:radial-gradient(circle at 46% 44%,#fff 0 14%,#ffc080 26%,#f48420 46%,#e06808 68%,#b84c00 100%);"></div><div class="ser" style="left:597px;top:772px;">Normal</div><svg style="left:776px;top:771px" width="14" height="17" viewBox="0 0 14 17"><path d="M1.5 .5 H9 L12.5 4 V16.5 H1.5 Z" fill="#f2f7ff" stroke="#7fa3d8"/><path d="M9 .5 V4 H12.5Z" fill="#5f8fe0" stroke="#6f98dc"/><path d="M2.500 11 H11.500 V15.500 H2.500Z" fill="#b8d2f6"/></svg><div class="t" style="left:792px;top:773px;width:15px;overflow:hidden;font-size:11px">Сь</div><div class="t" style="left:810px;top:773px;font-size:11px">0 %</div><div class="t" style="left:882px;top:773px;font-size:11px;width:28px;overflow:hidden">21.02.</div>
<div style="left:209px;top:791px;width:703px;height:23px;border-top:1px solid #a9a9a9;border-bottom:1px solid #a9a9a9;"></div><div style="left:232px;top:796px;width:13px;height:13px;background:#606060"></div><div style="left:234px;top:798px;width:9px;height:9px;background:#fff"></div><div class="ser" style="left:338px;top:794px;width:237px">Make a test run to ensure graphics quality and ca</div><div style="left:579px;top:794px;width:15px;height:15px;border-radius:3px;background:linear-gradient(#f0553f,#c8200f);border:1px solid #a01808"></div><svg style="left:579px;top:794px" width="15" height="15" viewBox="0 0 15 15"><path d="M4 9.5 L7.5 5.5 L11 9.5" stroke="#fff" stroke-width="2" fill="none"/></svg><div class="ser" style="left:597px;top:794px;">High</div><div style="left:774px;top:793px;width:16px;height:16px;border-radius:50%;background:radial-gradient(circle at 45% 40%,#ffa050 0,#ee7010 60%,#c04800 100%);"></div><svg style="left:774px;top:793px" width="16" height="16" viewBox="0 0 16 16"><path d="M6 4 L11.5 8 L6 12 Z" fill="#fff"/></svg><div class="t" style="left:792px;top:795px;width:15px;overflow:hidden;font-size:11px">Ор</div><div class="t" style="left:810px;top:795px;font-size:11px">0 %</div><div class="t" style="left:882px;top:795px;font-size:11px;width:28px;overflow:hidden">21.02.</div>
<div style="left:209px;top:813px;width:703px;height:23px;border-top:1px solid #a9a9a9;border-bottom:1px solid #a9a9a9;"></div><div style="left:232px;top:818px;width:13px;height:13px;background:#606060"></div><div style="left:234px;top:820px;width:9px;height:9px;background:#fff"></div><div class="ser" style="left:338px;top:816px;width:237px">Make sure you know what your graphics production</div><div style="left:579px;top:816px;width:16px;height:16px;border-radius:50%;background:radial-gradient(circle at 46% 44%,#fff 0 14%,#ffc080 26%,#f48420 46%,#e06808 68%,#b84c00 100%);"></div><div class="ser" style="left:597px;top:816px;">Normal</div><div style="left:774px;top:815px;width:16px;height:16px;border-radius:50%;background:radial-gradient(circle at 45% 40%,#ffa050 0,#ee7010 60%,#c04800 100%);"></div><svg style="left:774px;top:815px" width="16" height="16" viewBox="0 0 16 16"><path d="M6 4 L11.5 8 L6 12 Z" fill="#fff"/></svg><div class="t" style="left:792px;top:817px;width:15px;overflow:hidden;font-size:11px">Ор</div><div class="t" style="left:810px;top:817px;font-size:11px">0 %</div><div class="t" style="left:882px;top:817px;font-size:11px;width:28px;overflow:hidden">23.04.</div>
<div style="left:209px;top:835px;width:703px;height:23px;border-top:1px solid #a9a9a9;border-bottom:1px solid #a9a9a9;"></div><div style="left:232px;top:840px;width:13px;height:13px;background:#606060"></div><div style="left:234px;top:842px;width:9px;height:9px;background:#fff"></div><div class="ser" style="left:338px;top:838px;width:237px">Meet printing deadlines</div><div style="left:579px;top:838px;width:16px;height:16px;border-radius:50%;background:radial-gradient(circle at 46% 44%,#fff 0 14%,#ffc080 26%,#f48420 46%,#e06808 68%,#b84c00 100%);"></div><div class="ser" style="left:597px;top:838px;">Normal</div><svg style="left:776px;top:837px" width="14" height="17" viewBox="0 0 14 17"><path d="M1.5 .5 H9 L12.5 4 V16.5 H1.5 Z" fill="#f2f7ff" stroke="#7fa3d8"/><path d="M9 .5 V4 H12.5Z" fill="#5f8fe0" stroke="#6f98dc"/><path d="M2.500 11 H11.500 V15.500 H2.500Z" fill="#b8d2f6"/></svg><div class="t" style="left:792px;top:839px;width:15px;overflow:hidden;font-size:11px">Сь</div><div class="t" style="left:810px;top:839px;font-size:11px">0 %</div><div class="t" style="left:882px;top:839px;font-size:11px;width:28px;overflow:hidden">21.02.</div>
<div style="left:209px;top:857px;width:703px;height:23px;border-top:1px solid #a9a9a9;border-bottom:1px solid #a9a9a9;"></div><div style="left:232px;top:862px;width:13px;height:13px;background:#606060"></div><div style="left:234px;top:864px;width:9px;height:9px;background:#fff"></div><svg style="left:232px;top:862px" width="12" height="12" viewBox="0 0 12 12"><path d="M2.800 5.500 L5 8.200 L9.200 3" stroke="#000" stroke-width="2" fill="none"/></svg><div class="ser" style="left:338px;top:860px;width:237px">Now complete your delivery script</div><div style="left:579px;top:860px;width:16px;height:16px;border-radius:50%;background:radial-gradient(circle at 46% 44%,#fff 0 14%,#ffc080 26%,#f48420 46%,#e06808 68%,#b84c00 100%);"></div><div class="ser" style="left:597px;top:860px;">Normal</div><div style="left:774px;top:859px;width:16px;height:16px;border-radius:50%;background:radial-gradient(circle at 50% 50%,#fff 0 12%,#f08020 22% 34%,#fff 40% 50%,#f08020 58%,#d06010 100%);"></div><div class="t" style="left:792px;top:861px;width:15px;overflow:hidden;font-size:11px">Оk</div><div class="t" style="left:810px;top:861px;font-size:11px">100 %</div><div class="t" style="left:882px;top:861px;font-size:11px;width:28px;overflow:hidden">24.02.</div>
<div style="left:209px;top:879px;width:703px;height:23px;border-top:1px solid #a9a9a9;border-bottom:1px solid #a9a9a9;"></div><div style="left:232px;top:884px;width:13px;height:13px;background:#606060"></div><div style="left:234px;top:886px;width:9px;height:9px;background:#fff"></div><div class="ser" style="left:338px;top:882px;width:237px">Refine graphics to get best effectiveness</div><div style="left:579px;top:882px;width:15px;height:15px;border-radius:3px;background:linear-gradient(#6fd24f,#2fa51f);border:1px solid #2a8a1c"></div><svg style="left:579px;top:882px" width="15" height="15" viewBox="0 0 15 15"><path d="M4 6 L7.5 10 L11 6" stroke="#fff" stroke-width="2" fill="none"/></svg><div class="ser" style="left:597px;top:882px;">Low</div><svg style="left:776px;top:881px" width="14" height="17" viewBox="0 0 14 17"><path d="M1.5 .5 H9 L12.5 4 V16.5 H1.5 Z" fill="#f2f7ff" stroke="#7fa3d8"/><path d="M9 .5 V4 H12.5Z" fill="#5f8fe0" stroke="#6f98dc"/><path d="M2.500 11 H11.500 V15.500 H2.500Z" fill="#b8d2f6"/></svg><div class="t" style="left:792px;top:883px;width:15px;overflow:hidden;font-size:11px">Сь</div><div class="t" style="left:810px;top:883px;font-size:11px">0 %</div><div class="t" style="left:882px;top:883px;font-size:11px;width:28px;overflow:hidden">22.02.</div>
<div style="left:209px;top:901px;width:703px;height:23px;border-top:1px solid #a9a9a9;border-bottom:1px solid #a9a9a9;"></div><div style="left:232px;top:906px;width:13px;height:13px;background:#606060"></div><div style="left:234px;top:908px;width:9px;height:9px;background:#fff"></div><div class="ser" style="left:338px;top:904px;width:237px">Review/test visual aids</div><div style="left:579px;top:904px;width:15px;height:15px;border-radius:3px;background:linear-gradient(#6fd24f,#2fa51f);border:1px solid #2a8a1c"></div><svg style="left:579px;top:904px" width="15" height="15" viewBox="0 0 15 15"><path d="M4 6 L7.5 10 L11 6" stroke="#fff" stroke-width="2" fill="none"/></svg><div class="ser" style="left:597px;top:904px;">Low</div><div style="left:774px;top:903px;width:16px;height:16px;border-radius:50%;background:radial-gradient(circle at 45% 40%,#ffa050 0,#ee7010 60%,#c04800 100%);"></div><svg style="left:774px;top:903px" width="16" height="16" viewBox="0 0 16 16"><path d="M6 4 L11.5 8 L6 12 Z" fill="#fff"/></svg><div class="t" style="left:792px;top:905px;width:15px;overflow:hidden;font-size:11px">Ор</div><div class="t" style="left:810px;top:905px;font-size:11px">30 %</div><div class="t" style="left:882px;top:905px;font-size:11px;width:28px;overflow:hidden">22.02.</div>
<div style="left:209px;top:923px;width:703px;height:23px;border-top:1px solid #a9a9a9;border-bottom:1px solid #a9a9a9;"></div><div style="left:232px;top:928px;width:13px;height:13px;background:#606060"></div><div style="left:234px;top:930px;width:9px;height:9px;background:#fff"></div><svg style="left:313px;top:926px" width="18" height="17" viewBox="0 0 18 17"><path d="M3.500 8 L6.500 12.500 L3 15.500Z" fill="#dcdcf8" stroke="#b8b8d8" stroke-width=".6"/><path d="M2 3.500 C5 -.5 9 .5 10.500 3.500 L17.500 8.500 C13 10.500 8 9 5 11.500 L3.500 6.500Z" fill="#1aa41a" stroke="#0a700a"/><path d="M5 4 C6.500 2.500 8 2.500 9 4" stroke="#5fd45f" fill="none"/><path d="M2 3 L1.500 14" stroke="#333" stroke-width="1.400"/></svg><div class="ser" style="left:338px;top:926px;width:237px">Transform the concepts from your story board to c</div><div style="left:579px;top:926px;width:15px;height:15px;border-radius:3px;background:linear-gradient(#f0553f,#c8200f);border:1px solid #a01808"></div><svg style="left:579px;top:926px" width="15" height="15" viewBox="0 0 15 15"><path d="M4 9.5 L7.5 5.5 L11 9.5" stroke="#fff" stroke-width="2" fill="none"/></svg><div class="ser" style="left:597px;top:926px;">High</div><div style="left:774px;top:925px;width:16px;height:16px;border-radius:50%;background:radial-gradient(circle at 45% 40%,#ffa050 0,#ee7010 60%,#c04800 100%);"></div><svg style="left:774px;top:925px" width="16" height="16" viewBox="0 0 16 16"><path d="M6 4 L11.5 8 L6 12 Z" fill="#fff"/></svg><div class="t" style="left:792px;top:927px;width:15px;overflow:hidden;font-size:11px">Ор</div><div class="t" style="left:810px;top:927px;font-size:11px">50 %</div><div class="t" style="left:882px;top:927px;font-size:11px;width:28px;overflow:hidden">06.03.</div>
<div style="left:209px;top:945px;width:703px;height:23px;border-top:1px solid #a9a9a9;border-bottom:1px solid #a9a9a9;"></div><div style="left:232px;top:950px;width:13px;height:13px;background:#606060"></div><div style="left:234px;top:952px;width:9px;height:9px;background:#fff"></div><div class="ser" style="left:338px;top:948px;width:237px">moves one o</div><div style="left:579px;top:948px;width:16px;height:16px;border-radius:50%;background:radial-gradient(circle at 46% 44%,#fff 0 14%,#ffc080 26%,#f48420 46%,#e06808 68%,#b84c00 100%);"></div><div class="ser" style="left:597px;top:948px;">Normal</div><svg style="left:776px;top:947px" width="14" height="17" viewBox="0 0 14 17"><path d="M1.5 .5 H9 L12.5 4 V16.5 H1.5 Z" fill="#f2f7ff" stroke="#7fa3d8"/><path d="M9 .5 V4 H12.5Z" fill="#5f8fe0" stroke="#6f98dc"/><path d="M2.500 11 H11.500 V15.500 H2.500Z" fill="#b8d2f6"/></svg><div class="t" style="left:792px;top:949px;width:15px;overflow:hidden;font-size:11px">Сь</div><div class="t" style="left:810px;top:949px;font-size:11px">0 %</div><div class="t" style="left:882px;top:949px;font-size:11px;width:28px;overflow:hidden">24.04.</div>
<div style="left:195px;top:681px;width:1px;height:287px;background:#a9a9a9"></div><div style="left:209px;top:681px;width:1px;height:287px;background:#a9a9a9"></div><div style="left:265px;top:681px;width:1px;height:287px;background:#a9a9a9"></div><div style="left:335px;top:681px;width:1px;height:287px;background:#a9a9a9"></div><div style="left:576px;top:681px;width:1px;height:287px;background:#a9a9a9"></div><div style="left:701px;top:681px;width:1px;height:287px;background:#a9a9a9"></div><div style="left:737px;top:681px;width:1px;height:287px;background:#a9a9a9"></div><div style="left:773px;top:681px;width:1px;height:287px;background:#a9a9a9"></div><div style="left:807px;top:681px;width:1px;height:287px;background:#a9a9a9"></div><div style="left:842px;top:681px;width:1px;height:287px;background:#a9a9a9"></div><div style="left:879px;top:681px;width:1px;height:287px;background:#a9a9a9"></div><div style="left:912px;top:681px;width:1px;height:287px;background:#a9a9a9"></div>
<div style="left:195px;top:967px;width:717px;height:1px;background:#a9a9a9"></div>
<div style="left:0;top:0;width:1280px;height:108px;background:#ece9d8"></div>
<div style="left:0;top:0;width:1280px;height:25px;background:linear-gradient(90deg,rgba(122,150,223,0) 40%,rgba(110,150,240,.45) 100%),linear-gradient(#9db7ee 0,#86a3e6 12%,#7b9ae3 45%,#7a94e0 80%,#7a8cdc 100%)"></div>
<svg style="left:1px;top:3px" width="18" height="18" viewBox="0 0 18 18"><path d="M1.5 1.5 H9 L12 4.5 V15.5 H1.5Z" fill="#fff" stroke="#222"/><circle cx="10.5" cy="9.5" r="3.2" fill="#8fe0e0" stroke="#123" stroke-width="1.4"/><path d="M13 12 L16 15.5" stroke="#123" stroke-width="2"/></svg>
<div class="t" style="left:21px;top:4px;font-weight:bold;font-size:13.4px;color:#f4f7ff;line-height:17px;height:17px;letter-spacing:.1px">Print Preview</div>
<div class="wb" style="left:1212px;background:linear-gradient(135deg,#5f88ea,#3d66d8)"></div><div style="left:1216px;top:15px;width:8px;height:3px;background:#fff"></div>
<div class="wb" style="left:1235px;background:linear-gradient(135deg,#5f88ea,#3d66d8)"></div><div style="left:1242px;top:7px;width:8px;height:7px;border:1px solid #fff;border-top-width:2px"></div><div style="left:1239px;top:10px;width:8px;height:8px;border:1px solid #fff;border-top-width:2px;background:#4a72dc"></div>
<div class="wb" style="left:1258px;background:linear-gradient(135deg,#d4868c,#b8505c)"></div><svg style="left:1258px;top:4px" width="19" height="18" viewBox="0 0 19 18"><path d="M5 4.500 L14 13.500 M14 4.500 L5 13.500" stroke="#fff" stroke-width="2.4"/></svg>
<div class="t" style="left:6px;top:29px;font-size:10px;color:#aca899;text-shadow:1px 1px 0 #fff">File</div>
<div class="t" style="left:34px;top:29px;font-size:10px;color:#aca899;text-shadow:1px 1px 0 #fff">View</div>
<div class="t" style="left:68px;top:29px;font-size:10px;color:#aca899;text-shadow:1px 1px 0 #fff">Format</div>
<div class="t" style="left:114px;top:29px;font-size:10px;color:#aca899;text-shadow:1px 1px 0 #fff">Go</div>
<div style="left:0;top:46px;width:1280px;height:2px;border-top:1px solid #c8c5b4;border-bottom:1px solid #f6f5ee"></div>
<div style="left:0;top:81px;width:1280px;height:2px;border-top:1px solid #c8c5b4;border-bottom:1px solid #f6f5ee"></div>
<div style="left:0;top:107px;width:1280px;height:1px;background:#a8a594"></div>
<svg style="left:10px;top:54px" width="18" height="18" viewBox="0 0 18 18"><circle cx="9" cy="9" r="6" fill="none" stroke="#3a3a3a" stroke-width="4.500" stroke-dasharray="2.9 1.81"/><circle cx="9" cy="9" r="4.500" fill="none" stroke="#4a4a4a" stroke-width="3"/><circle cx="9" cy="9" r="2" fill="#c8c6ba"/></svg>
<svg style="left:36px;top:56px" width="17" height="15" viewBox="0 0 17 15"><path d="M1 4 H6 L7.500 5.500 H12 V7 H5 L1.500 13.500Z" fill="#8e8a1e" stroke="#3c3a08"/><path d="M4.500 7.500 H16 L12.500 13.500 H1.500Z" fill="#e2d84e" stroke="#4a4608"/><path d="M11 2.500 C13 1 15 2 15.500 4 M15.500 4 L13.500 3.500 M15.500 4 L16 2" stroke="#222" fill="none"/></svg>
<svg style="left:62px;top:56px" width="16" height="14" viewBox="0 0 16 14"><path d="M2 3.500 H6.500 L8 5 H14 V12.500 H2Z" fill="#c1beb0" stroke="#b4b1a2"/><path d="M9 2 H13 V4" stroke="#c4c1b3" fill="none"/></svg>
<svg style="left:87px;top:55px" width="16" height="16" viewBox="0 0 16 16"><rect x="1" y="1" width="14" height="14" fill="#1c1c14" /><rect x="3.500" y="1.500" width="9" height="6" fill="#d8d890"/><rect x="4" y="10" width="8" height="5" fill="#4c4c28"/><rect x="9" y="11" width="2" height="3" fill="#e8e8b0"/><rect x="1" y="1" width="14" height="14" fill="none" stroke="#3a3a10"/></svg>
<div style="left:111px;top:52px;width:2px;height:23px;border-left:1px solid #c5c2b2;border-right:1px solid #fff"></div>
<svg style="left:120px;top:55px" width="17" height="16" viewBox="0 0 17 16"><path d="M4.500 1.500 H12.500 L11.500 6 H3.500Z" fill="#f4f4f4" stroke="#333"/><path d="M1.500 6.500 H15.500 V12 H1.500Z" fill="#77756c" stroke="#2c2c2c"/><path d="M3 10 H14 V14 H3Z" fill="#bdbaaa" stroke="#333"/><path d="M4.500 12 H12" stroke="#e8e6a0"/></svg>
<svg style="left:144px;top:55px" width="17" height="16" viewBox="0 0 17 16"><path d="M4.500 1.500 H12.500 L11.500 6 H3.500Z" fill="#16a090" stroke="#333"/><path d="M1.500 6.500 H15.500 V12 H1.500Z" fill="#77756c" stroke="#2c2c2c"/><path d="M3 10 H14 V14 H3Z" fill="#bdbaaa" stroke="#333"/><path d="M4.500 12 H12" stroke="#e8e6a0"/><path d="M3.500 2 H13.500 V4 H3.500Z" fill="#0c8474"/></svg>
<div style="left:166px;top:51px;width:24px;height:24px;border:1px solid #c9c6b6;border-right-color:#fff;border-bottom-color:#fff;background:#f5f4ec"></div>
<svg style="left:169px;top:57px" width="18" height="12" viewBox="0 0 18 12"><rect x="1" y="1" width="7.500" height="10" rx="1.500" fill="#dcdad0" stroke="#555" stroke-width="1.300"/><rect x="9.500" y="1" width="7.500" height="10" rx="1.500" fill="#fff" stroke="#555" stroke-width="1.300"/></svg>
<div style="left:195px;top:52px;width:2px;height:23px;border-left:1px solid #c5c2b2;border-right:1px solid #fff"></div>
<div style="left:200px;top:51px;width:24px;height:24px;border:1px solid #c9c6b6;border-right-color:#fff;border-bottom-color:#fff;background:#f5f4ec"></div>
<svg style="left:204px;top:56px" width="16" height="15" viewBox="0 0 16 15"><rect x=".5" y=".5" width="15" height="14" fill="#64645c" stroke="#222"/><rect x="1" y="1" width="14" height="4" fill="#1c2ca8"/><path d="M5.500 5 V14 M10.500 5 V14 M1 8 H15 M1 11 H15" stroke="#d8d8d0"/><rect x="6" y="8" width="4" height="6" fill="#222"/></svg>
<svg style="left:236px;top:55px" width="16" height="16" viewBox="0 0 16 16"><rect x="1" y="1" width="8" height="9" fill="#1c5a48" stroke="#103828"/><rect x="6" y="5" width="8" height="10" fill="#a8a8f0" stroke="#3c3c9c"/><path d="M11 1.500 C14 2 15 4 14 6.500" stroke="#2c2cb0" fill="none" stroke-width="1.400"/></svg>
<svg style="left:260px;top:55px" width="16" height="16" viewBox="0 0 16 16"><rect x="4" y="5" width="10" height="10" fill="#f4f0b8" stroke="#444"/><rect x="1.500" y="1.500" width="8" height="7" fill="#e4e4f4" stroke="#444"/><path d="M5 3 L10 8 M10 8 V4.500 M10 8 H6.500" stroke="#1c1cb0" stroke-width="1.500" fill="none"/></svg>
<div style="left:285px;top:52px;width:2px;height:23px;border-left:1px solid #c5c2b2;border-right:1px solid #fff"></div>
<svg style="left:293px;top:56px" width="18" height="14" viewBox="0 0 18 14"><rect x="1" y="1" width="16" height="12" rx="2" fill="#9c9a90" stroke="#8a887e"/><rect x="3" y="7" width="12" height="4" fill="#b4b2a6"/></svg>
<svg style="left:318px;top:56px" width="18" height="14" viewBox="0 0 18 14"><rect x="1" y="1" width="16" height="12" rx="2" fill="#f0f0f0" stroke="#555" stroke-width="1.300"/><rect x="2" y="2" width="14" height="3.500" fill="#2c3cd0"/><rect x="6" y="5" width="6" height="5" fill="#666"/></svg>
<svg style="left:343px;top:56px" width="18" height="15" viewBox="0 0 18 15"><rect x=".5" y=".5" width="17" height="14" rx="2.500" fill="#1c4c44" stroke="#0c2c28"/><rect x="5" y="3.500" width="8" height="8" fill="#b4b4e8"/><rect x="7" y="5.500" width="4" height="4" fill="#e8e8ff"/></svg>
<svg style="left:368px;top:56px" width="18" height="15" viewBox="0 0 18 15"><rect x=".5" y=".5" width="17" height="14" rx="2.500" fill="#1c4c44" stroke="#0c2c28"/><path d="M4.500 4 V11 M13.500 4 V11 M7 7.500 H11" stroke="#fff" stroke-width="1.600"/></svg>
<svg style="left:393px;top:56px" width="18" height="15" viewBox="0 0 18 15"><rect x="1" y="1" width="7" height="6" fill="#dcdacc" stroke="#b0ad9e"/><rect x="10" y="1" width="7" height="6" fill="#dcdacc" stroke="#b0ad9e"/><rect x="1" y="8.500" width="7" height="6" fill="#dcdacc" stroke="#b0ad9e"/><rect x="10" y="8.500" width="7" height="6" fill="#dcdacc" stroke="#b0ad9e"/></svg>
<svg style="left:418px;top:56px" width="19" height="15" viewBox="0 0 19 15"><rect x=".5" y=".5" width="18" height="14" rx="2.500" fill="#24544c" stroke="#0c2c28"/><path d="M2 7.500 H17" stroke="#1c443c"/></svg>
<svg style="left:443px;top:56px" width="18" height="15" viewBox="0 0 18 15"><rect x="1" y="1" width="16" height="13" rx="2" fill="#fafafa" stroke="#444" stroke-width="1.300"/><rect x="2" y="2" width="5" height="3.500" fill="#2c3cd0"/><rect x="11" y="2" width="5" height="3.500" fill="#2c3cd0"/><path d="M9 1.500 V13.500" stroke="#222" stroke-width="1.600"/></svg>
<div style="left:471px;top:56px;width:139px;height:16px;background:#fff"></div>
<div class="t" style="left:475px;top:57px">100%</div>
<div style="left:594px;top:57px;width:15px;height:14px;border:1px solid #fff;border-right-color:#716f64;border-bottom-color:#716f64;background:#ece9d8;box-shadow:1px 1px 0 #404040"></div>
<svg style="left:597px;top:61px" width="9" height="6" viewBox="0 0 9 6"><path d="M1 1 L4.500 5 L8 1Z" fill="#000"/></svg>
<div style="left:616px;top:52px;width:2px;height:23px;border-left:1px solid #c5c2b2;border-right:1px solid #fff"></div>
<svg style="left:625px;top:57px" width="17" height="12" viewBox="0 0 17 12"><path d="M1 6 L6 1.500 V4 H10 L12 1.500 V4 H16 V8 H12 V10.500 L10 8 H6 V10.500Z" fill="#b8b5a8" stroke="#aaa798"/></svg>
<svg style="left:650px;top:57px" width="14" height="12" viewBox="0 0 14 12"><path d="M1 6 L6.500 1.500 V4 H13 V8 H6.500 V10.500Z" fill="#b8b5a8" stroke="#aaa798"/></svg>
<div style="left:671px;top:52px;width:2px;height:23px;border-left:1px solid #c5c2b2;border-right:1px solid #fff"></div>
<div style="left:677px;top:56px;width:60px;height:17px;background:#fff"></div>
<div class="t" style="left:682px;top:57px">1</div>
<div style="left:719px;top:56px;width:16px;height:8px;border:1px solid #fff;border-right-color:#8c8a7c;border-bottom-color:#8c8a7c;background:#ece9d8"></div>
<svg style="left:719px;top:56px" width="16" height="9" viewBox="0 0 16 9"><path d="M5 5.500 L8 2.500 L11 5.500Z" fill="#000"/></svg>
<div style="left:719px;top:64px;width:16px;height:8px;border:1px solid #fff;border-right-color:#8c8a7c;border-bottom-color:#8c8a7c;background:#ece9d8"></div>
<svg style="left:719px;top:64px" width="16" height="9" viewBox="0 0 16 9"><path d="M5 2.500 L8 5.500 L11 2.500Z" fill="#000"/></svg>
<div style="left:743px;top:52px;width:2px;height:23px;border-left:1px solid #c5c2b2;border-right:1px solid #fff"></div>
<svg style="left:751px;top:57px" width="14" height="12" viewBox="0 0 14 12"><path d="M13 6 L7.500 1.500 V4 H1 V8 H7.500 V10.500Z" fill="#1cd8e8" stroke="#0c4c5c"/></svg>
<svg style="left:774px;top:57px" width="18" height="12" viewBox="0 0 18 12"><path d="M17 6 L12 1.500 V4 H8 L6 1.500 V4 H1 V8 H6 V10.500 L8 8 H12 V10.500Z" fill="#1cd8e8" stroke="#0c4c5c"/></svg>
<div style="left:801px;top:52px;width:2px;height:23px;border-left:1px solid #c5c2b2;border-right:1px solid #fff"></div>
<svg style="left:808px;top:55px" width="16" height="17" viewBox="0 0 16 17"><path d="M3 1.500 H10 V15.500 H3Z" fill="#8c7c10" stroke="#2c2608"/><path d="M3 1.500 L8 4 V16.500 L3 15.500Z" fill="#c4b020" stroke="#2c2608"/><path d="M8 8.500 H12 V6 L15.500 9.500 L12 13 V10.500 H8Z" fill="#222"/></svg>
<div class="t" style="left:16px;top:89px">Margins</div>
<div class="t" style="left:68px;top:89px">Left:</div>
<div class="t" style="left:180px;top:89px">Top:</div>
<div class="t" style="left:292px;top:89px">Right:</div>
<div class="t" style="left:413px;top:89px">Bottom:</div>
<div class="t" style="left:534px;top:89px">Header:</div>
<div class="t" style="left:655px;top:89px">Footer:</div>
<div class="fld" style="left:98px;top:87px;width:66px;height:19px"><div class="t" style="top:2px">12,7 mm</div></div>
<div class="fld" style="left:208px;top:87px;width:66px;height:19px"><div class="t" style="top:2px">12,7 mm</div></div>
<div class="fld" style="left:328px;top:87px;width:66px;height:19px"><div class="t" style="top:2px">12,7 mm</div></div>
<div class="fld" style="left:458px;top:87px;width:66px;height:19px"><div class="t" style="top:2px">12,7 mm</div></div>
<div class="fld" style="left:578px;top:87px;width:66px;height:19px"><div class="t" style="top:2px">6,4 mm</div></div>
<div class="fld" style="left:698px;top:87px;width:66px;height:19px"><div class="t" style="top:2px">6,4 mm</div></div>
<div style="left:1108px;top:108px;width:17px;height:892px;background:#f3f2ea;border-left:1px solid #e4e2d4"></div>
<div style="left:1109px;top:109px;width:16px;height:16px;background:#ece9d8;border:1px solid #fff;border-right-color:#9d9a8a;border-bottom-color:#9d9a8a"></div>
<svg style="left:1112px;top:113px" width="10" height="8" viewBox="0 0 10 8"><path d="M1 6 L5 2 L9 6Z" fill="#000"/></svg>
<div style="left:1109px;top:983px;width:16px;height:16px;background:#ece9d8;border:1px solid #fff;border-right-color:#9d9a8a;border-bottom-color:#9d9a8a"></div>
<svg style="left:1112px;top:987px" width="10" height="8" viewBox="0 0 10 8"><path d="M1 2 L5 6 L9 2Z" fill="#000"/></svg>
<div style="left:1125px;top:108px;width:6px;height:890px;background:#ece9d8"></div>
<div style="left:1131px;top:108px;width:149px;height:890px;background:#c6c3b8"></div>
<div style="left:1135px;top:111px;width:82px;height:114px;background:#fff;border:3px solid #2a62d8;box-shadow:inset 0 0 0 1px #7fa0e8"></div>
<div style="left:1142px;top:117px;width:70px;height:93px;background:repeating-linear-gradient(#cfcdc8 0 9px,#e9e8e4 9px 11px);"></div>
<div style="left:1142px;top:117px;width:70px;height:93px;background:repeating-linear-gradient(90deg,transparent 0 9px,rgba(255,255,255,.55) 9px 11px);"></div>
<div style="left:1180px;top:117px;width:2px;height:93px;background:#e59a58"></div>
<div style="left:1189px;top:117px;width:2px;height:93px;background:rgba(168,196,232,.5)"></div>
<div style="left:1142px;top:117px;width:2px;height:93px;background:repeating-linear-gradient(#333 0 2px,transparent 2px 4px)"></div>
<div class="t" style="left:1135px;top:138px;width:82px;text-align:center;font-family:'DejaVu Sans','Liberation Sans',sans-serif;font-size:62px;line-height:64px;height:64px;color:rgba(72,72,228,.82);-webkit-text-stroke:0">1</div>
<div style="left:1135px;top:227px;width:82px;height:115px;background:#fff;border:1px solid #222;border-right-width:2px;border-bottom-width:3px;border-radius:2px"></div>
<div style="left:1142px;top:233px;width:70px;height:35px;background:repeating-linear-gradient(#cfcdc8 0 9px,#e9e8e4 9px 11px);"></div>
<div style="left:1142px;top:233px;width:70px;height:35px;background:repeating-linear-gradient(90deg,transparent 0 9px,rgba(255,255,255,.55) 9px 11px);"></div>
<div style="left:1180px;top:233px;width:2px;height:35px;background:#e59a58"></div>
<div style="left:1189px;top:233px;width:2px;height:35px;background:rgba(168,196,232,.5)"></div>
<div style="left:1196px;top:247px;width:2px;height:21px;background:#e0a070"></div>
<div style="left:1142px;top:233px;width:2px;height:35px;background:repeating-linear-gradient(#333 0 2px,transparent 2px 4px)"></div>
<div class="t" style="left:1135px;top:256px;width:82px;text-align:center;font-family:'DejaVu Sans','Liberation Sans',sans-serif;font-size:62px;line-height:64px;height:64px;color:rgba(72,72,228,.82);-webkit-text-stroke:0">2</div>
<div style="left:0;top:999px;width:1280px;height:23px;background:#ece9d8;border-top:1px solid #fff"></div>
<div class="t" style="left:11px;top:1005px">Page:</div>
<div class="t" style="left:104px;top:1005px">of</div>
<div class="t" style="left:178px;top:1005px">Pages</div>
<div class="t" style="left:236px;top:1005px">Paper Size:</div>
<div class="t" style="left:466px;top:1005px">Status:</div>
<div class="fld" style="left:42px;top:1004px;width:42px;height:16px"><div class="t" style="top:0px">1</div></div>
<div class="fld" style="left:119px;top:1004px;width:42px;height:16px"><div class="t" style="top:0px">2</div></div>
<div class="fld" style="left:298px;top:1004px;width:146px;height:16px"><div class="t" style="top:0px">215,9 mm x 279,4 mm</div></div>
<div class="fld" style="left:505px;top:1004px;width:775px;height:16px"><div class="t" style="left:4px;right:auto;top:0">Ready</div></div>
<div style="left:0;top:1021px;width:1280px;height:3px;background:linear-gradient(#b4c8e4 0,#5596ec 34%,#2a6ad6)"></div>
<div style="left:560px;top:370px;width:534px;height:437px;background:#0c38d4;border-radius:8px 8px 0 0;"></div>
<div style="left:560px;top:370px;width:534px;height:29px;border-radius:8px 8px 0 0;background:linear-gradient(#0a5be8 0,#3b95ff 7%,#1f83fb 14%,#0468f2 30%,#0460ec 60%,#0356e4 85%,#0348c8 100%)"></div>
<div style="left:564px;top:399px;width:526px;height:404px;background:#ece9d8"></div>
<svg style="left:567px;top:379px" width="14" height="12" viewBox="0 0 14 12"><path d="M.5 1.500 H6 V10.500 H.5Z" fill="#fff" stroke="#222"/><path d="M8 1.500 H13.500 V10.500 H8Z" fill="#f4e6b0" stroke="#222"/><path d="M7 1 V11" stroke="#333" stroke-width="1.500"/></svg>
<div class="t" style="left:586px;top:377px;font-weight:bold;font-size:12.6px;color:#fff;line-height:17px;height:17px;text-shadow:1px 1px 1px #0a2a80">Page Setup</div>
<div style="left:1067px;top:375px;width:21px;height:21px;border:1px solid #fff;border-radius:3px;background:linear-gradient(135deg,#f4a888,#e4521c 45%,#c03408)"></div>
<svg style="left:1067px;top:375px" width="21" height="21" viewBox="0 0 21 21"><path d="M6 6 L15 15 M15 6 L6 15" stroke="#fff" stroke-width="2.4"/></svg>
<div style="left:566px;top:424px;width:520px;height:342px;border:1px solid;border-color:#fff #716f64 #716f64 #fff;box-shadow:inset -1px -1px 0 #aca899"></div>
<div style="left:566px;top:400px;width:48px;height:26px;background:#ece9d8;border:1px solid;border-color:#fff #716f64 transparent #fff;border-bottom:none;border-radius:2px 2px 0 0;box-shadow:inset -1px 0 0 #aca899"></div>
<div class="t" style="left:575px;top:406px"><u>P</u>age</div>
<div style="left:614px;top:404px;width:47px;height:20px;border-top:1px solid #fff;border-right:1px solid #716f64;border-radius:0 2px 0 0;box-shadow:inset -1px 0 0 #aca899"></div>
<div class="t" style="left:618px;top:407px"><u>M</u>argins</div>
<div style="left:663px;top:404px;width:81px;height:20px;border-top:1px solid #fff;border-right:1px solid #716f64;border-radius:0 2px 0 0;box-shadow:inset -1px 0 0 #aca899"></div>
<div class="t" style="left:667px;top:407px"><u>H</u>eader\Footer</div>
<div style="left:746px;top:404px;width:43px;height:20px;border-top:1px solid #fff;border-right:1px solid #716f64;border-radius:0 2px 0 0;box-shadow:inset -1px 0 0 #aca899"></div>
<div class="t" style="left:750px;top:407px"><u>S</u>caling</div>
<div style="left:578px;top:438px;width:228px;height:317px;border:1px solid #c6c3b2;border-radius:3px;box-shadow:1px 1px 0 #fbfaf4,inset 1px 1px 0 #fbfaf4"></div>
<div style="left:586px;top:437px;width:36px;height:3px;background:#ece9d8"></div>
<div class="t" style="left:588px;top:431px">Paper</div>
<div class="t" style="left:584px;top:446px">T<u>y</u>pe</div>
<div style="left:612px;top:454px;width:188px;height:2px;border-top:1px solid #c9c6b5;border-bottom:1px solid #fff"></div>
<div style="left:591px;top:463px;width:205px;height:147px;background:#fff;border:1px solid;border-color:#848277 #fff #fff #848277;box-shadow:inset 1px 1px 0 #55544c,inset -1px -1px 0 #dddac9;"></div>
<svg style="left:597px;top:465px" width="12" height="15" viewBox="0 0 12 15"><path d="M.5 .5 H8 L11.500 4 V14.500 H.5Z" fill="#fff" stroke="#444"/><path d="M8 .5 V4 H11.500" fill="#ddd" stroke="#444"/><path d="M3 7 H9 M3 9.500 H9 M3 12 H7.500" stroke="#999"/></svg>
<div class="t" style="left:611px;top:466px;">Letter</div>
<svg style="left:597px;top:483px" width="12" height="15" viewBox="0 0 12 15"><path d="M.5 .5 H8 L11.500 4 V14.500 H.5Z" fill="#fff" stroke="#444"/><path d="M8 .5 V4 H11.500" fill="#ddd" stroke="#444"/><path d="M3 7 H9 M3 9.500 H9 M3 12 H7.500" stroke="#999"/></svg>
<div class="t" style="left:611px;top:484px;">Legal</div>
<svg style="left:597px;top:501px" width="12" height="15" viewBox="0 0 12 15"><path d="M.5 .5 H8 L11.500 4 V14.500 H.5Z" fill="#fff" stroke="#444"/><path d="M8 .5 V4 H11.500" fill="#ddd" stroke="#444"/><path d="M3 7 H9 M3 9.500 H9 M3 12 H7.500" stroke="#999"/></svg>
<div class="t" style="left:611px;top:502px;">Executive</div>
<div style="left:593px;top:518px;width:185px;height:18px;background:#316ac5;border:1px dotted #d9b87a"></div>
<svg style="left:597px;top:519px" width="12" height="15" viewBox="0 0 12 15"><path d="M.5 .5 H8 L11.500 4 V14.500 H.5Z" fill="#fff" stroke="#444"/><path d="M8 .5 V4 H11.500" fill="#ddd" stroke="#444"/><path d="M3 7 H9 M3 9.500 H9 M3 12 H7.500" stroke="#999"/></svg>
<div class="t" style="left:611px;top:520px;color:#fff">A4</div>
<svg style="left:597px;top:537px" width="12" height="15" viewBox="0 0 12 15"><path d="M.5 .5 H8 L11.500 4 V14.500 H.5Z" fill="#fff" stroke="#444"/><path d="M8 .5 V4 H11.500" fill="#ddd" stroke="#444"/><path d="M3 7 H9 M3 9.500 H9 M3 12 H7.500" stroke="#999"/></svg>
<div class="t" style="left:611px;top:538px;">A5</div>
<svg style="left:597px;top:555px" width="12" height="15" viewBox="0 0 12 15"><path d="M.5 .5 H8 L11.500 4 V14.500 H.5Z" fill="#fff" stroke="#444"/><path d="M8 .5 V4 H11.500" fill="#ddd" stroke="#444"/><path d="M3 7 H9 M3 9.500 H9 M3 12 H7.500" stroke="#999"/></svg>
<div class="t" style="left:611px;top:556px;">B5 (JIS)</div>
<svg style="left:597px;top:573px" width="12" height="15" viewBox="0 0 12 15"><path d="M.5 .5 H8 L11.500 4 V14.500 H.5Z" fill="#fff" stroke="#444"/><path d="M8 .5 V4 H11.500" fill="#ddd" stroke="#444"/><path d="M3 7 H9 M3 9.500 H9 M3 12 H7.500" stroke="#999"/></svg>
<div class="t" style="left:611px;top:574px;">Folio</div>
<svg style="left:597px;top:591px" width="12" height="15" viewBox="0 0 12 15"><path d="M.5 .5 H8 L11.500 4 V14.500 H.5Z" fill="#fff" stroke="#444"/><path d="M8 .5 V4 H11.500" fill="#ddd" stroke="#444"/><path d="M3 7 H9 M3 9.500 H9 M3 12 H7.500" stroke="#999"/></svg>
<div class="t" style="left:611px;top:592px;">Конверт #10</div>
<div style="left:778px;top:465px;width:16px;height:143px;background:#f4f6fd"></div>
<div style="left:778px;top:465px;width:16px;height:16px;border:1px solid #fff;border-radius:3px;background:linear-gradient(90deg,#cbd9fb,#b6c9f7)"></div>
<svg style="left:778px;top:465px" width="16" height="16" viewBox="0 0 16 16"><path d="M4 10 L8 6 L12 10" stroke="#4d6185" stroke-width="2" fill="none"/></svg>
<div style="left:778px;top:592px;width:16px;height:16px;border:1px solid #fff;border-radius:3px;background:linear-gradient(90deg,#cbd9fb,#b6c9f7)"></div>
<svg style="left:778px;top:592px" width="16" height="16" viewBox="0 0 16 16"><path d="M4 6 L8 10 L12 6" stroke="#4d6185" stroke-width="2" fill="none"/></svg>
<div style="left:778px;top:482px;width:16px;height:53px;border:1px solid #fff;border-radius:3px;background:linear-gradient(90deg,#cad8fb,#b9cbf8)"></div>
<div class="t" style="left:584px;top:617px">Dimension</div>
<div style="left:640px;top:625px;width:160px;height:2px;border-top:1px solid #c9c6b5;border-bottom:1px solid #fff"></div>
<div class="t" style="left:596px;top:638px"><u>W</u>idth:</div>
<div style="left:659px;top:635px;width:99px;height:20px;background:#fff;border:1px solid;border-color:#848277 #fff #fff #848277;box-shadow:inset 1px 1px 0 #55544c,inset -1px -1px 0 #dddac9;"></div>
<div class="t" style="left:662px;top:638px">215,90 mm</div>
<div style="left:740px;top:637px;width:16px;height:8px;border:1px solid #fff;border-right-color:#8c8a7c;border-bottom-color:#8c8a7c;background:#ece9d8"></div>
<svg style="left:740px;top:637px" width="16" height="8" viewBox="0 0 16 8"><path d="M5.500 5.500 L8 3 L10.500 5.500Z" fill="#000"/></svg>
<div style="left:740px;top:645px;width:16px;height:8px;border:1px solid #fff;border-right-color:#8c8a7c;border-bottom-color:#8c8a7c;background:#ece9d8"></div>
<svg style="left:740px;top:645px" width="16" height="8" viewBox="0 0 16 8"><path d="M5.500 2.500 L8 5 L10.500 2.500Z" fill="#000"/></svg>
<div class="t" style="left:596px;top:664px">H<u>e</u>ight:</div>
<div style="left:659px;top:661px;width:99px;height:20px;background:#fff;border:1px solid;border-color:#848277 #fff #fff #848277;box-shadow:inset 1px 1px 0 #55544c,inset -1px -1px 0 #dddac9;"></div>
<div class="t" style="left:662px;top:664px">279,40 mm</div>
<div style="left:740px;top:663px;width:16px;height:8px;border:1px solid #fff;border-right-color:#8c8a7c;border-bottom-color:#8c8a7c;background:#ece9d8"></div>
<svg style="left:740px;top:663px" width="16" height="8" viewBox="0 0 16 8"><path d="M5.500 5.500 L8 3 L10.500 5.500Z" fill="#000"/></svg>
<div style="left:740px;top:671px;width:16px;height:8px;border:1px solid #fff;border-right-color:#8c8a7c;border-bottom-color:#8c8a7c;background:#ece9d8"></div>
<svg style="left:740px;top:671px" width="16" height="8" viewBox="0 0 16 8"><path d="M5.500 2.500 L8 5 L10.500 2.500Z" fill="#000"/></svg>
<div class="t" style="left:584px;top:703px">Paper so<u>u</u>rce</div>
<div style="left:656px;top:711px;width:144px;height:2px;border-top:1px solid #c9c6b5;border-bottom:1px solid #fff"></div>
<div style="left:590px;top:721px;width:207px;height:22px;background:#fff;border:1px solid;border-color:#848277 #fff #fff #848277;box-shadow:inset 1px 1px 0 #55544c,inset -1px -1px 0 #dddac9;"></div>
<svg style="left:596px;top:724px" width="17" height="16" viewBox="0 0 17 16"><path d="M1 3 H6 L7.500 5 H16 V14.500 H1Z" fill="#f4dc6a" stroke="#8a7418"/><circle cx="9.500" cy="9.500" r="3.200" fill="#ffe14a" stroke="#555"/><circle cx="9.500" cy="9.500" r="1.200" fill="#222"/></svg>
<div class="t" style="left:613px;top:725px">Автовыбор</div>
<div style="left:778px;top:723px;width:17px;height:18px;border:1px solid #fff;border-right-color:#716f64;border-bottom-color:#716f64;background:#ece9d8;box-shadow:inset -1px -1px 0 #aca899"></div>
<svg style="left:782px;top:729px" width="9" height="6" viewBox="0 0 9 6"><path d="M1 1 L4.500 5 L8 1Z" fill="#000"/></svg>
<div style="left:569px;top:774px;width:107px;height:23px;border:1px solid;border-color:#fff #716f64 #716f64 #fff;box-shadow:inset -1px -1px 0 #aca899;background:#ece9d8"></div>
<div class="t" style="left:569px;top:778px;width:107px;text-align:center">Print...</div>
<div style="left:922px;top:774px;width:80px;height:23px;border:1px solid #000;background:#ece9d8"></div>
<div style="left:923px;top:775px;width:78px;height:21px;border:1px solid;border-color:#fff #716f64 #716f64 #fff;box-shadow:inset -1px -1px 0 #aca899;background:#ece9d8"></div>
<div class="t" style="left:922px;top:778px;width:80px;text-align:center">OK</div>
<div style="left:1008px;top:774px;width:77px;height:23px;border:1px solid;border-color:#fff #716f64 #716f64 #fff;box-shadow:inset -1px -1px 0 #aca899;background:#ece9d8"></div>
<div class="t" style="left:1008px;top:778px;width:77px;text-align:center">Cancel</div>
<div style="left:817px;top:438px;width:258px;height:176px;border:1px solid #c6c3b2;border-radius:3px;box-shadow:1px 1px 0 #fbfaf4,inset 1px 1px 0 #fbfaf4"></div>
<div style="left:825px;top:437px;width:60px;height:3px;background:#ece9d8"></div>
<div class="t" style="left:827px;top:431px">Orientation</div>
<div style="left:836px;top:455px;width:104px;height:147px;background:#fff;border:1px solid #9a9a94;box-shadow:2px 2px 0 #000"></div>
<div style="left:979px;top:494px;width:12px;height:12px;border-radius:50%;border:1px solid;border-color:#8a887c #f8f8f4 #f8f8f4 #8a887c;background:#fff;box-shadow:inset 1px 1px 0 #55544c"></div>
<div style="left:983px;top:498px;width:4px;height:4px;border-radius:50%;background:#000"></div>
<div class="t" style="left:996px;top:493px">P<u>o</u>rtrait</div>
<div style="left:979px;top:542px;width:12px;height:12px;border-radius:50%;border:1px solid;border-color:#8a887c #f8f8f4 #f8f8f4 #8a887c;background:#fff;box-shadow:inset 1px 1px 0 #55544c"></div>
<div class="t" style="left:996px;top:541px"><u>L</u>andscape</div>
<div style="left:817px;top:624px;width:258px;height:72px;border:1px solid #c6c3b2;border-radius:3px;box-shadow:1px 1px 0 #fbfaf4,inset 1px 1px 0 #fbfaf4"></div>
<div style="left:825px;top:623px;width:58px;height:3px;background:#ece9d8"></div>
<div class="t" style="left:827px;top:617px">Print Order</div>
<div style="left:827px;top:638px;width:75px;height:50px;border:1px solid #6e6c62;background:#fff"></div>
<svg style="left:828px;top:639px" width="73" height="48" viewBox="0 0 73 48"><rect x="2.500" y="3.500" width="67" height="17" fill="#e4e2d6" stroke="#8a887c" stroke-width=".8"/><rect x="2.500" y="25.500" width="67" height="17" fill="#e4e2d6" stroke="#8a887c" stroke-width=".8"/><path d="M4 7.500 H69 M4 29.500 H69" stroke="#111" stroke-width="3" stroke-dasharray="3 3.600"/><path d="M4 14.500 H69 M4 36.500 H69" stroke="#777" stroke-width="2.500" stroke-dasharray="2.500 4.100"/><path d="M3 11 H69 M3 33 H69 M3 17.500 H69 M3 39.500 H69" stroke="#aaa" stroke-width=".7"/><path d="M17 9.500 H50 L24 38 H54" stroke="#0c8c8c" stroke-width="5.500" fill="none" stroke-linejoin="miter"/><path d="M50 32 L58 38 L50 44Z" fill="#0c8c8c"/></svg>
<div style="left:923px;top:644px;width:12px;height:12px;border-radius:50%;border:1px solid;border-color:#8a887c #f8f8f4 #f8f8f4 #8a887c;background:#fff;box-shadow:inset 1px 1px 0 #55544c"></div>
<div class="t" style="left:940px;top:643px"><u>D</u>own, then over</div>
<div style="left:923px;top:667px;width:12px;height:12px;border-radius:50%;border:1px solid;border-color:#8a887c #f8f8f4 #f8f8f4 #8a887c;background:#fff;box-shadow:inset 1px 1px 0 #55544c"></div>
<div style="left:927px;top:671px;width:4px;height:4px;border-radius:50%;background:#000"></div>
<div class="t" style="left:940px;top:666px">O<u>v</u>er, then down</div>
<div style="left:817px;top:703px;width:258px;height:52px;border:1px solid #c6c3b2;border-radius:3px;box-shadow:1px 1px 0 #fbfaf4,inset 1px 1px 0 #fbfaf4"></div>
<div style="left:825px;top:702px;width:44px;height:3px;background:#ece9d8"></div>
<div class="t" style="left:827px;top:696px">Shading</div>
<div style="left:828px;top:724px;width:13px;height:13px;background:#fff;border:1px solid;border-color:#848277 #fff #fff #848277;box-shadow:inset 1px 1px 0 #55544c,inset -1px -1px 0 #dddac9;"></div>
<div class="t" style="left:846px;top:723px">Print using <u>g</u>ray shading</div>
</div></body></html>
